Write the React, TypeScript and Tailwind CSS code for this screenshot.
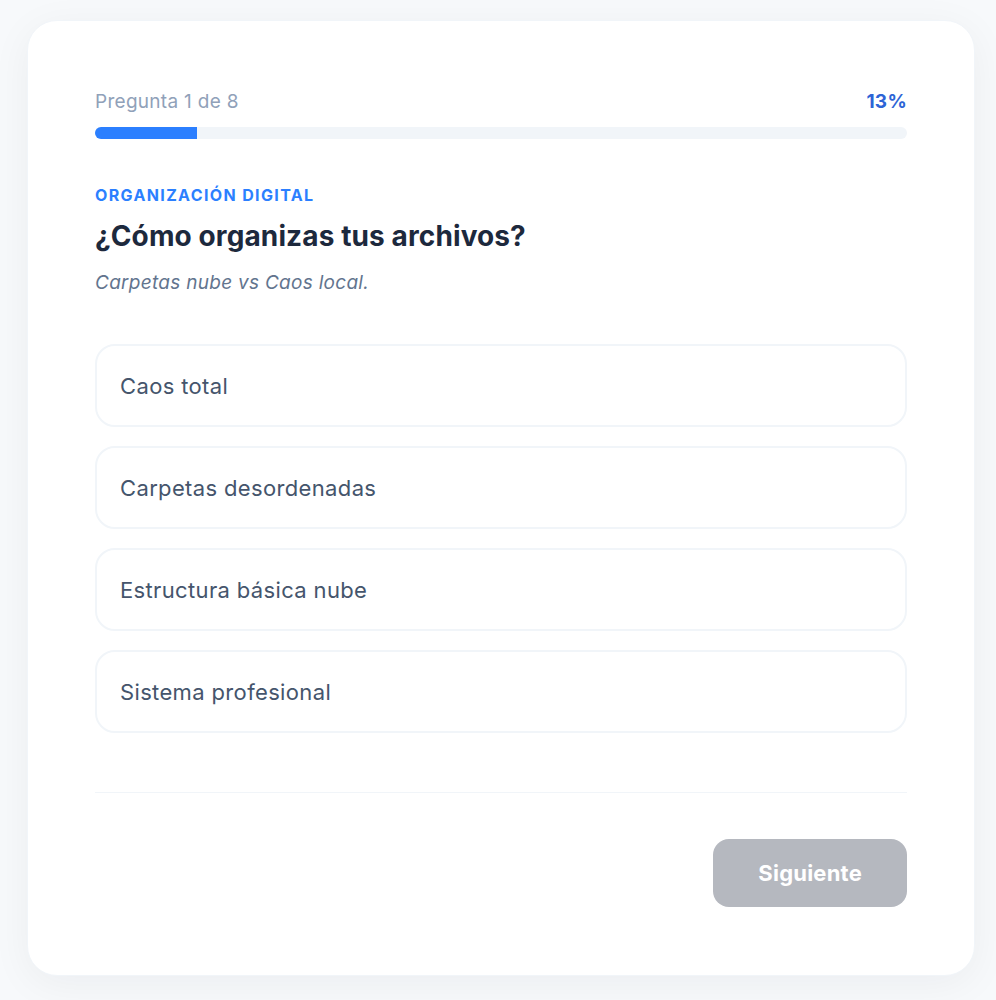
import React, { useState } from 'react';

const options = [
    'Caos total',
    'Carpetas desordenadas',
    'Estructura básica nube',
    'Sistema profesional',
];

export default function App() {
    const [selected, setSelected] = useState<number | null>(null);
    const current = 1;
    const total = 8;
    const percent = Math.round((current / total) * 100);

    return (
        <div className="min-h-screen bg-[#f7f9fb] pt-[20px] pl-[27px] pb-[27px]" style={{ fontFamily: 'Inter, "Noto Sans", sans-serif' }}>
            <div className="w-[948px] rounded-[30px] bg-white border border-slate-100 shadow-[0_8px_40px_rgba(15,23,42,0.05)] px-[67px] pt-[67px] pb-[68px]">
                <div className="flex items-center justify-between text-[19px] leading-[28px] tracking-[0.015em]">
                    <span className="text-slate-400">Pregunta {current} de {total}</span>
                    <span className="font-bold text-[#2d64d6]">{percent}%</span>
                </div>
                <div className="mt-[11px] h-3 w-full rounded-full bg-slate-100 overflow-hidden">
                    <div className="h-full bg-blue-500" style={{ width: `${(current / total) * 100}%` }} />
                </div>

                <div className="mt-[46px] text-[16px] leading-[20px] font-bold uppercase tracking-[0.085em] text-blue-500">
                    Organización Digital
                </div>
                <h1 className="mt-[13px] text-[28px] leading-[36px] font-bold tracking-[0.004em] text-slate-800">
                    ¿Cómo organizas tus archivos?
                </h1>
                <p className="mt-[16px] text-[19px] leading-[26px] tracking-[0.015em] italic text-slate-500">
                    Carpetas nube vs Caos local.
                </p>

                <div className="mt-[48px] flex flex-col gap-[19px]">
                    {options.map((opt, i) => (
                        <button
                            key={opt}
                            onClick={() => setSelected(i)}
                            className={`w-full h-[83px] text-left px-[23px] rounded-[20px] border-2 text-[22px] leading-[28px] tracking-[0.016em] ${
                                selected === i ? 'border-blue-500 bg-blue-50 text-slate-800' : 'border-slate-100 bg-white text-slate-600'
                            }`}
                        >
                            {opt}
                        </button>
                    ))}
                </div>

                <div className="mt-[59px] border-t border-slate-100" />

                <div className="mt-[46px] flex justify-end">
                    <button
                        disabled={selected === null}
                        className={`h-[68px] px-[45px] rounded-[16px] text-[22px] leading-[28px] tracking-[0.01em] font-bold text-white ${
                            selected === null ? 'bg-[#b5b8bf]' : 'bg-blue-600'
                        }`}
                    >
                        Siguiente
                    </button>
                </div>
            </div>
        </div>
    );
}
